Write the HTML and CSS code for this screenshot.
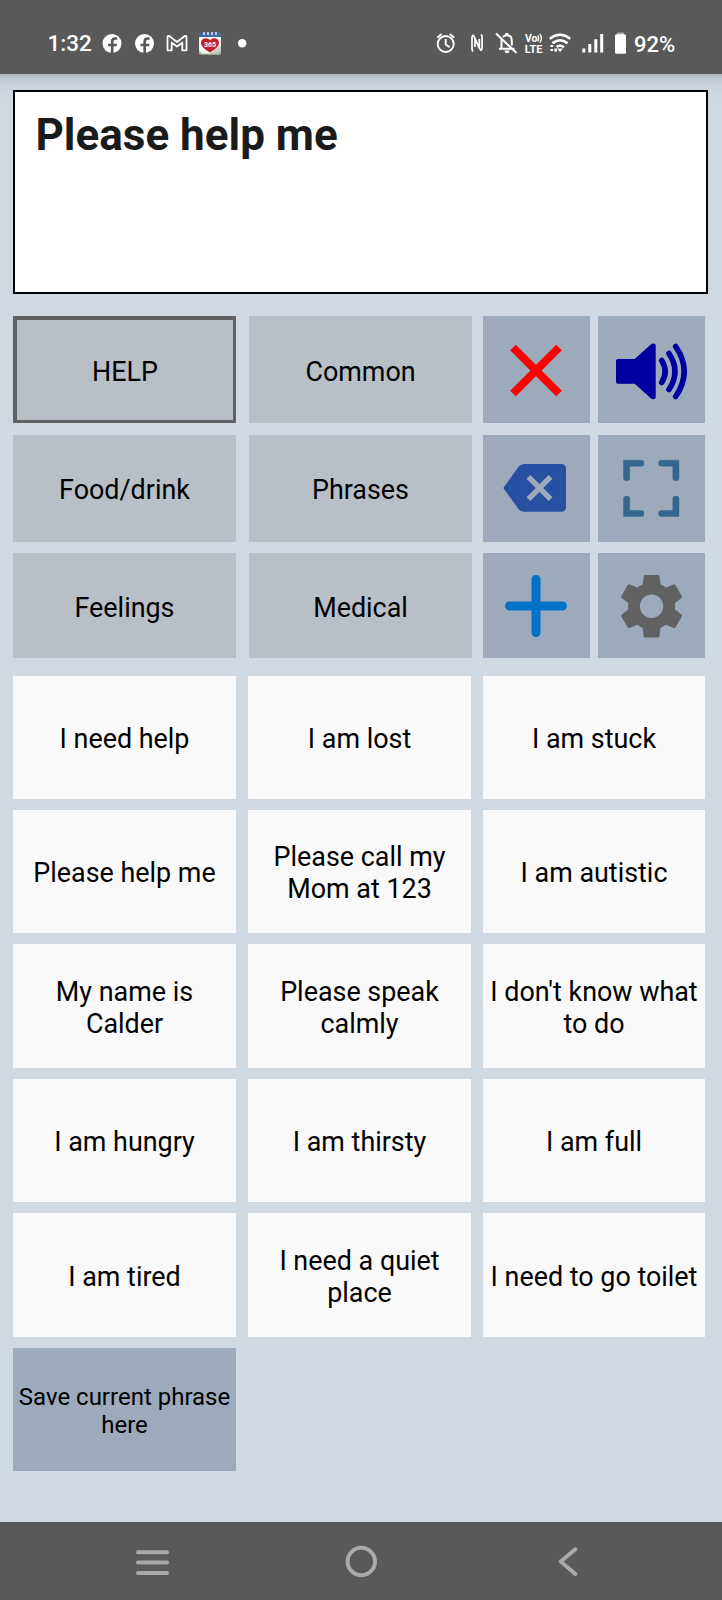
FILE: index.html
```
<!DOCTYPE html>
<html lang="en">
<head>
<meta charset="utf-8">
<title>Phrases</title>
<link rel="stylesheet" href="styles.css">
</head>
<body>
<header class="status">
  <span class="time">1:32</span>
  <svg width="32" height="74" viewBox="96 0 32 74"><circle cx="112" cy="43.500" r="9.500" fill="#fff"/><path d="M112.200 53.500V41.500q0-3 3-3h2M108 45h8.800" fill="none" stroke="#595959" stroke-width="2.700"/></svg>
  <svg width="32" height="74" viewBox="96 0 32 74"><circle cx="112.500" cy="43.500" r="9.500" fill="#fff"/><path d="M112.700 53.500V41.500q0-3 3-3h2M108.500 45h8.800" fill="none" stroke="#595959" stroke-width="2.700"/></svg>
  <svg width="33" height="74" viewBox="160 0 33 74"><path d="M167.500 50.300V37.200q0-1.600 1.700-1.200l7.800 6 7.800-6q1.700-.4 1.700 1.200v13.100h-4.200v-7.800l-5.300 4.100-5.300-4.100v7.800z" fill="none" stroke="#fff" stroke-width="1.800" stroke-linejoin="round"/></svg>
  <svg width="34" height="74" viewBox="193 0 34 74"><rect x="199" y="33" width="22" height="21.500" rx="2.500" fill="#f4f4f2"/><path d="M221 45v7q0 2.500-2.500 2.500H209z" fill="#cbd0cd"/><path d="M199 37V35q0-2.500 2.500-2.500h17Q221 32.500 221 35v2z" fill="#3c69a0"/><path d="M204 32v3M208 32v3M212 32v3M216 32v3" stroke="#fff" stroke-width="1.300"/><path d="M199.500 51q0 3.200 3 3.200h15q3 0 3-3.200" fill="none" stroke="#6f9a70" stroke-width=".8"/><path d="M210 52.500c-4-2.500-9-5.500-9-9.500 0-5.500 7-6 9-2.500 2-3.500 9-3 9 2.500 0 4-5 7-9 9.500z" fill="#c3222f"/><text x="210" y="47.300" class="badge">365</text></svg>
  <svg width="30" height="74" viewBox="227 0 30 74"><circle cx="242.200" cy="43.200" r="4.200" fill="#fff"/></svg>
  <span class="spacer"></span>
  <svg width="32" height="74" viewBox="430 0 32 74"><g fill="none" stroke="#fff" stroke-width="1.900"><circle cx="445.700" cy="44" r="8"/><path d="M445.700 39v5.500l4 2.800M437.300 37.700l4.300-3.700M449.800 34l4.400 3.700"/></g></svg>
  <svg width="28" height="74" viewBox="462 0 28 74"><path d="M473.200 51.500q-1.300-.5-1.200-3V38q0-2.800 1.500-2.500L479.300 48.500V39M480.800 34.500q1.500.5 1.300 3v10q0 2.800-1.500 2.700L475 38.500V47" fill="none" stroke="#fff" stroke-width="1.700"/></svg>
  <svg width="31" height="74" viewBox="490 0 31 74"><g fill="none" stroke="#fff" stroke-width="2"><path d="M501.500 39.500v9.200M499 48.700h15.500M502.800 37q1.700-1.800 4-1.800 5 0 5 6v4.300"/><path d="M506.800 33v2.500" stroke-width="3"/><path d="M496 33.500l20.500 19.500"/></g><path d="M504.500 50.500h5q-.3 2.800-2.500 2.800t-2.500-2.800z" fill="#fff"/></svg>
  <svg width="25" height="74" viewBox="521 0 25 74"><text x="525" y="42.300" class="volte" textLength="12.500" lengthAdjust="spacingAndGlyphs">Vo</text><path d="M537.700 35.500q2 2.800 0 5.800M539.800 34q3.200 4.200 0 8.700" fill="none" stroke="#fff" stroke-width="1.300"/><text x="524.700" y="52.700" class="volte" textLength="17.800" lengthAdjust="spacingAndGlyphs">LTE</text></svg>
  <svg width="30" height="74" viewBox="546 0 30 74"><g fill="none" stroke="#fff" stroke-width="2.500"><path d="M549.700 38.800q10.300-8 20.600 0M552.500 43.300q7.500-6 15 0M556 47.200q4-3 8 0"/></g><path d="M557.300 48.500h5.500l-2.700 3.700z" fill="#fff"/><path d="M551.700 44v7M555 46.500v5" stroke="#595959" stroke-width="4"/><path d="M551.700 45v2M551.700 49v2M555.700 48.500v3" stroke="#fff" stroke-width="2.700"/></svg>
  <svg width="33" height="74" viewBox="576 0 33 74"><path d="M583.800 48.500v4M589.800 44v8.500M595.800 39.300v13.200M601.700 34v18.500" stroke="#fff" stroke-width="3"/></svg>
  <svg width="23" height="74" viewBox="609 0 23 74"><path d="M617 35v-2.500h7V35z" fill="#aaa"/><rect x="615" y="34.300" width="11" height="19.500" rx="1.500" fill="#fff"/></svg>
  <span class="percent">92%</span>
</header>

<main class="app">
  <div class="message">Please help me</div>
  <section class="controls">
    <div class="categories">
      <button class="category active">HELP</button>
      <button class="category">Common</button>
      <button class="category">Food/drink</button>
      <button class="category">Phrases</button>
      <button class="category">Feelings</button>
      <button class="category">Medical</button>
    </div>
    <div class="tools">
      <button class="tool" aria-label="Clear"><svg viewBox="0 0 107 107"><path d="M30 31.500l46 46M76 31.500l-46 46" stroke="#f00" stroke-width="8"/></svg></button>
      <button class="tool" aria-label="Speak"><svg viewBox="0 0 107 107"><path d="M20 43h16.700L52.500 28.800q1.500-1.300 3-1.300 2.200 0 2.200 2v51.800q0 2-2.200 2-1.500 0-3-1.300L36.700 67.700H20q-2 0-2-2V45q0-2 2-2z" fill="#0000a0"/><path d="M63.700 44.500q7 11 0 22M71 37.500q12 18 0 36M77.700 30.500q17 25 0 50" fill="none" stroke="#0000a0" stroke-width="5.600" stroke-linecap="round"/></svg></button>
      <button class="tool" aria-label="Backspace"><svg viewBox="0 0 107 107"><path d="M41 29h37q5 0 5 5v37.700q0 5-5 5H41q-3.500 0-5.500-2.800L20.300 53l15.200-21.200Q37.500 29 41 29z" fill="#2850a2"/><path d="M45.500 41.800l22 22.400M67.500 41.800l-22 22.400" stroke="#9caabb" stroke-width="5.400"/></svg></button>
      <button class="tool" aria-label="Full screen"><svg viewBox="0 0 107 107"><path id="corner" d="M25.500 25.200h18q2.500 0 2.500 3t-2.500 3H31.700v12q0 2.500-3.100 2.500t-3.100-2.500z" fill="#33678d" stroke="#33678d" stroke-width=".4"/><use href="#corner" transform="matrix(-1 0 0 1 106.500 0)"/><use href="#corner" transform="matrix(1 0 0 -1 0 106.700)"/><use href="#corner" transform="matrix(-1 0 0 -1 106.500 106.700)"/></svg></button>
      <button class="tool" aria-label="Add"><svg viewBox="0 0 107 105"><path d="M53 26.500v53M26.500 53h53" stroke="#0073c8" stroke-width="9" stroke-linecap="round"/></svg></button>
      <button class="tool" aria-label="Settings"><svg viewBox="0 0 107 105"><path transform="translate(53.600 53.200) scale(3.260) translate(-12 -12)" fill="#616161" fill-rule="evenodd" d="M19.140 12.940c.04-.3.06-.61.06-.94 0-.32-.02-.64-.07-.94l2.030-1.580c.18-.14.23-.41.12-.61l-1.920-3.320c-.12-.22-.37-.29-.59-.22l-2.390.96c-.5-.38-1.030-.7-1.620-.94l-.36-2.540c-.04-.24-.24-.41-.48-.41h-3.840c-.24 0-.43.17-.47.41l-.36 2.540c-.59.24-1.130.57-1.620.94l-2.390-.96c-.22-.08-.47 0-.59.22L2.740 8.870c-.12.21-.08.47.12.61l2.030 1.580c-.05.3-.09.63-.09.94s.02.64.07.94l-2.030 1.580c-.18.14-.23.41-.12.61l1.920 3.320c.12.22.37.29.59.22l2.390-.96c.5.38 1.030.7 1.620.94l.36 2.540c.05.24.24.41.48.41h3.840c.24 0 .44-.17.47-.41l.36-2.540c.59-.24 1.130-.56 1.620-.94l2.390.96c.22.08.47 0 .59-.22l1.920-3.320c.12-.22.07-.47-.12-.61l-2.010-1.580zM12 15.600c-1.980 0-3.600-1.620-3.600-3.600s1.620-3.600 3.600-3.600 3.600 1.620 3.600 3.600-1.620 3.600-3.600 3.600z"/></svg></button>
    </div>
  </section>
  <section class="phrases">
    <button class="phrase">I need help</button>
    <button class="phrase">I am lost</button>
    <button class="phrase">I am stuck</button>
    <button class="phrase">Please help me</button>
    <button class="phrase">Please call my<br>Mom at 123</button>
    <button class="phrase">I am autistic</button>
    <button class="phrase">My name is<br>Calder</button>
    <button class="phrase">Please speak<br>calmly</button>
    <button class="phrase">I don't know what<br>to do</button>
    <button class="phrase">I am hungry</button>
    <button class="phrase">I am thirsty</button>
    <button class="phrase">I am full</button>
    <button class="phrase">I am tired</button>
    <button class="phrase">I need a quiet<br>place</button>
    <button class="phrase">I need to go toilet</button>
    <button class="phrase save">Save current phrase<br>here</button>
  </section>
</main>

<nav class="navbar">
  <svg width="722" height="78" viewBox="0 0 722 78" fill="none" stroke="#a9a9a9" stroke-width="4" stroke-linecap="round" stroke-linejoin="round"><path d="M138 30.200h29M138 40.600h29M138 51h29"/><circle cx="361.300" cy="39.500" r="13.700"/><path d="M575.300 27.300L560.800 39.500l14.500 12.500"/></svg>
</nav>
</body>
</html>
```
FILE: styles.css
```
* { box-sizing: border-box; }

body {
  margin: 0;
  width: 722px;
  height: 1600px;
  display: flex;
  flex-direction: column;
  overflow: hidden;
  background: #d0d8e2;
  font-family: Roboto, sans-serif;
  color: #000;
}

svg { display: block; flex: none; }

.status {
  height: 74px;
  flex: none;
  display: flex;
  align-items: center;
  padding: 12px 0 0 47.5px;
  background: #595959;
  color: #fff;
  font-size: 22.5px;
  font-weight: 500;
}

.status svg { margin-top: -12px; }
.time { width: 48.5px; }
.spacer { width: 173px; }
.percent { width: 90px; padding: 2px 0 0 2px; font-size: 22px; }
.badge { font: 700 7px Roboto, sans-serif; fill: #fff; text-anchor: middle; }
.volte { font: 700 10.5px Roboto, sans-serif; fill: #fff; }

.app {
  flex: 1;
  display: flex;
  flex-direction: column;
  padding: 16px 14px 0 13px;
  background: linear-gradient(#adb5be 0, #bdc6cf 4px, #c6ced8 9px, #ccd4de 16px, #d0d8e2 25px);
}

.message {
  height: 204px;
  flex: none;
  padding: 17px 20.5px;
  border: 2px solid #000;
  background: #fff;
  color: #1b1b1b;
  font-size: 44px;
  font-weight: 700;
  line-height: 52px;
}

button {
  margin: 0;
  padding: 0;
  border: 0;
  font-family: inherit;
  color: #000;
}

.controls {
  display: flex;
  gap: 11px;
  margin-top: 22px;
}

.categories, .tools {
  display: grid;
  grid-template-rows: 107px 107px 105px;
  row-gap: 11.5px;
}

.categories {
  grid-template-columns: 223px 223px;
  column-gap: 13px;
}

.tools {
  grid-template-columns: 107px 107px;
  column-gap: 8px;
}

.category {
  padding: 4px 0 0;
  background: #b8bfc7;
  font-size: 26.9px;
}

.category.active {
  border: 3px solid #616161;
  border-top-width: 4px;
  border-left-width: 4px;
}

.tool { background: #9caabb; }
.tool svg { width: 100%; height: 100%; }

.phrases {
  display: grid;
  grid-template-columns: 223px 223px 222px;
  grid-template-rows: 123px 123px 124px 123px 124px 123px;
  gap: 11px 12px;
  margin-top: 18px;
}

.phrase {
  padding: 3px 0 0;
  background: #f9f9f9;
  font-size: 26.9px;
  line-height: 32px;
  white-space: nowrap;
}

.phrase.save {
  background: #9caabb;
  font-size: 24px;
  line-height: 28px;
}

.navbar {
  height: 78px;
  flex: none;
  background: #595959;
}
```
